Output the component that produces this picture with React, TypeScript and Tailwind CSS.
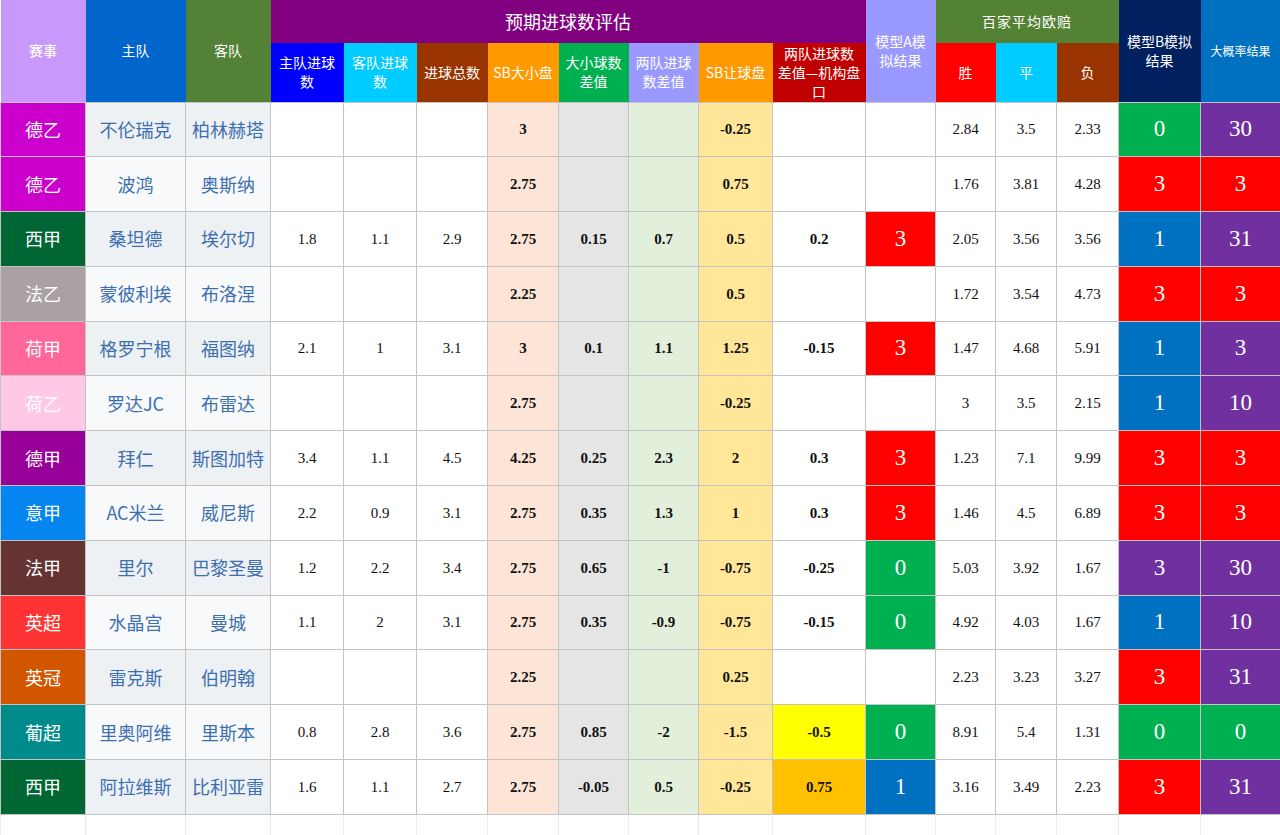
import React from 'react';

const widths = [85, 100, 85, 73, 73, 71, 71, 70, 70, 74, 93, 70, 60, 61, 62, 82, 80];

const C = {
  red: 'bg-[#ff0000]',
  green: 'bg-[#00b050]',
  blue: 'bg-[#0070c0]',
  purple: 'bg-[#7030a0]',
};

type Row = {
  league: string;
  lc: string;
  home: string;
  away: string;
  hg?: string;
  ag?: string;
  tg?: string;
  ou: string;
  oud?: string;
  gd?: string;
  ah: string;
  diff?: string;
  diffBg?: string;
  a?: [string, string];
  w: string;
  d: string;
  l: string;
  b: [string, string];
  p: [string, string];
};

const rows: Row[] = [
  { league: '德乙', lc: 'bg-[#cc00cc]', home: '不伦瑞克', away: '柏林赫塔', ou: '3', ah: '-0.25', w: '2.84', d: '3.5', l: '2.33', b: ['0', C.green], p: ['30', C.purple] },
  { league: '德乙', lc: 'bg-[#cc00cc]', home: '波鸿', away: '奥斯纳', ou: '2.75', ah: '0.75', w: '1.76', d: '3.81', l: '4.28', b: ['3', C.red], p: ['3', C.red] },
  { league: '西甲', lc: 'bg-[#006633]', home: '桑坦德', away: '埃尔切', hg: '1.8', ag: '1.1', tg: '2.9', ou: '2.75', oud: '0.15', gd: '0.7', ah: '0.5', diff: '0.2', a: ['3', C.red], w: '2.05', d: '3.56', l: '3.56', b: ['1', C.blue], p: ['31', C.purple] },
  { league: '法乙', lc: 'bg-[#aaa2a2]', home: '蒙彼利埃', away: '布洛涅', ou: '2.25', ah: '0.5', w: '1.72', d: '3.54', l: '4.73', b: ['3', C.red], p: ['3', C.red] },
  { league: '荷甲', lc: 'bg-[#ff6699]', home: '格罗宁根', away: '福图纳', hg: '2.1', ag: '1', tg: '3.1', ou: '3', oud: '0.1', gd: '1.1', ah: '1.25', diff: '-0.15', a: ['3', C.red], w: '1.47', d: '4.68', l: '5.91', b: ['1', C.blue], p: ['3', C.purple] },
  { league: '荷乙', lc: 'bg-[#ffc8e4]', home: '罗达JC', away: '布雷达', ou: '2.75', ah: '-0.25', w: '3', d: '3.5', l: '2.15', b: ['1', C.blue], p: ['10', C.purple] },
  { league: '德甲', lc: 'bg-[#990099]', home: '拜仁', away: '斯图加特', hg: '3.4', ag: '1.1', tg: '4.5', ou: '4.25', oud: '0.25', gd: '2.3', ah: '2', diff: '0.3', a: ['3', C.red], w: '1.23', d: '7.1', l: '9.99', b: ['3', C.red], p: ['3', C.red] },
  { league: '意甲', lc: 'bg-[#0585f0]', home: 'AC米兰', away: '威尼斯', hg: '2.2', ag: '0.9', tg: '3.1', ou: '2.75', oud: '0.35', gd: '1.3', ah: '1', diff: '0.3', a: ['3', C.red], w: '1.46', d: '4.5', l: '6.89', b: ['3', C.red], p: ['3', C.red] },
  { league: '法甲', lc: 'bg-[#663333]', home: '里尔', away: '巴黎圣曼', hg: '1.2', ag: '2.2', tg: '3.4', ou: '2.75', oud: '0.65', gd: '-1', ah: '-0.75', diff: '-0.25', a: ['0', C.green], w: '5.03', d: '3.92', l: '1.67', b: ['3', C.purple], p: ['30', C.purple] },
  { league: '英超', lc: 'bg-[#ff3333]', home: '水晶宫', away: '曼城', hg: '1.1', ag: '2', tg: '3.1', ou: '2.75', oud: '0.35', gd: '-0.9', ah: '-0.75', diff: '-0.15', a: ['0', C.green], w: '4.92', d: '4.03', l: '1.67', b: ['1', C.blue], p: ['10', C.purple] },
  { league: '英冠', lc: 'bg-[#d25500]', home: '雷克斯', away: '伯明翰', ou: '2.25', ah: '0.25', w: '2.23', d: '3.23', l: '3.27', b: ['3', C.red], p: ['31', C.purple] },
  { league: '葡超', lc: 'bg-[#008b8b]', home: '里奥阿维', away: '里斯本', hg: '0.8', ag: '2.8', tg: '3.6', ou: '2.75', oud: '0.85', gd: '-2', ah: '-1.5', diff: '-0.5', diffBg: 'bg-[#ffff00]', a: ['0', C.green], w: '8.91', d: '5.4', l: '1.31', b: ['0', C.green], p: ['0', C.green] },
  { league: '西甲', lc: 'bg-[#006633]', home: '阿拉维斯', away: '比利亚雷', hg: '1.6', ag: '1.1', tg: '2.7', ou: '2.75', oud: '-0.05', gd: '0.5', ah: '-0.25', diff: '0.75', diffBg: 'bg-[#ffc000]', a: ['1', C.blue], w: '3.16', d: '3.49', l: '2.23', b: ['3', C.red], p: ['31', C.purple] },
];

const cjk = "font-['Noto_Sans_CJK_SC',sans-serif]";
const serif = "font-['Liberation_Serif','Noto_Sans_CJK_SC',serif]";
const cell = 'border border-[#c4c4c4] text-center align-middle p-0';
const num = `${cell} ${serif} text-[15px] text-[#111]`;
const bold = `${num} font-bold`;
const big = `${cell} ${serif} text-[23px] text-white`;
const head = `text-center align-middle p-0 text-white leading-[1.35] ${cjk}`;

export default function App() {
  return (
    <div className="w-[1280px] h-[835px] overflow-hidden bg-white">
      <table className="table-fixed border-collapse w-[1280px]">
        <colgroup>
          {widths.map((w, i) => (
            <col key={i} style={{ width: w }} />
          ))}
        </colgroup>
        <thead>
          <tr className="h-[43px]">
            <th rowSpan={2} className={`${head} bg-[#c899fb] text-[14px] font-medium`}>赛事</th>
            <th rowSpan={2} className={`${head} bg-[#0066cc] text-[14px] font-normal`}>主队</th>
            <th rowSpan={2} className={`${head} bg-[#538135] text-[14px] font-normal`}>客队</th>
            <th colSpan={8} className={`${head} bg-[#800080] text-[18px] font-normal`}>预期进球数评估</th>
            <th rowSpan={2} className={`${head} bg-[#9999ff] text-[14px] font-normal px-2`}>模型A模拟结果</th>
            <th colSpan={3} className={`${head} bg-[#548235] text-[14px] font-normal tracking-[1px]`}>百家平均欧赔</th>
            <th rowSpan={2} className={`${head} bg-[#002060] text-[14px] font-normal px-2`}>模型B模拟结果</th>
            <th rowSpan={2} className={`${head} bg-[#0070c0] text-[12px] font-normal`}>大概率结果</th>
          </tr>
          <tr className="h-[59px]">
            <th className={`${head} bg-[#0000ff] text-[14px] font-normal px-1.5`}>主队进球数</th>
            <th className={`${head} bg-[#00ccff] text-[14px] font-normal px-1.5`}>客队进球数</th>
            <th className={`${head} bg-[#993300] text-[14px] font-normal`}>进球总数</th>
            <th className={`${head} bg-[#ff9900] text-[14px] font-normal`}>SB大小盘</th>
            <th className={`${head} bg-[#00b050] text-[14px] font-normal px-1`}>大小球数差值</th>
            <th className={`${head} bg-[#9999ff] text-[14px] font-normal px-1`}>两队进球数差值</th>
            <th className={`${head} bg-[#ff9900] text-[14px] font-normal`}>SB让球盘</th>
            <th className={`${head} bg-[#c00000] text-[14px] font-normal leading-[1.3]`}>
              两队进球数
              <br />
              差值—机构盘
              <br />口
            </th>
            <th className={`${head} bg-[#ff0000] text-[14px] font-normal`}>胜</th>
            <th className={`${head} bg-[#00ccff] text-[14px] font-normal`}>平</th>
            <th className={`${head} bg-[#993300] text-[14px] font-normal`}>负</th>
          </tr>
        </thead>
        <tbody>
          {rows.map((r, i) => {
            const team = i % 2 === 0 ? 'bg-[#eef1f4]' : 'bg-[#f7f9fb]';
            return (
              <tr key={i} className="h-[54.8px]">
                <td className={`${cell} ${r.lc} ${cjk} text-[18px] text-white`}>{r.league}</td>
                <td className={`${cell} ${team} ${cjk} text-[18px] text-[#3d6fae]`}>{r.home}</td>
                <td className={`${cell} ${team} ${cjk} text-[18px] text-[#3d6fae]`}>{r.away}</td>
                <td className={num}>{r.hg}</td>
                <td className={num}>{r.ag}</td>
                <td className={num}>{r.tg}</td>
                <td className={`${bold} bg-[#fce4d6]`}>{r.ou}</td>
                <td className={`${bold} bg-[#e5e5e5]`}>{r.oud}</td>
                <td className={`${bold} bg-[#e2efda]`}>{r.gd}</td>
                <td className={`${bold} bg-[#ffe699]`}>{r.ah}</td>
                <td className={`${bold} ${r.diffBg ?? ''}`}>{r.diff}</td>
                <td className={`${big} ${r.a ? r.a[1] : ''}`}>{r.a?.[0]}</td>
                <td className={num}>{r.w}</td>
                <td className={num}>{r.d}</td>
                <td className={num}>{r.l}</td>
                <td className={`${big} ${r.b[1]}`}>{r.b[0]}</td>
                <td className={`${big} ${r.p[1]}`}>{r.p[0]}</td>
              </tr>
            );
          })}
          <tr className="h-[55px]">
            {widths.map((_, i) => (
              <td key={i} className="border border-[#ececec] p-0" />
            ))}
          </tr>
        </tbody>
      </table>
    </div>
  );
}
